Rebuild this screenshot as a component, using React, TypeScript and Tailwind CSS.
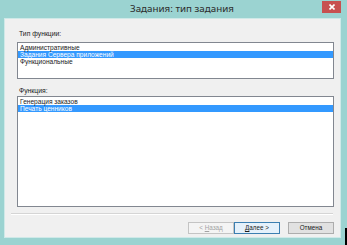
import React from 'react';

const font = { fontFamily: '"Liberation Sans", Arial, sans-serif' };

function ListBox({
  items,
  selected,
  className
}: {
  items: string[];
  selected: number;
  className: string;
}) {
  return (
    <div className={`ml-[12px] mr-[6px] border border-[#828790] bg-white pt-px ${className}`}>
      {items.map((item, i) => (
        <div
          key={item}
          className={`h-[7px] pl-[2px] text-[6.6px] leading-[7px] whitespace-nowrap ${
            i === selected ? 'bg-[#3399ff] text-white' : 'text-[#1a1a1a]'
          }`}>
          {item}
        </div>
      ))}
    </div>
  );
}

export default function App() {
  return (
    <div className="relative h-[245px] w-[347px] bg-[#9bd3d1]" style={font}>
      {/* Title bar */}
      <div className="relative flex h-[18px] items-center pl-[130px]">
        <span
          className="text-[9.8px] text-[#2b2b2b]"
          style={{ fontFamily: '"Noto Sans", "Open Sans", sans-serif' }}>
          Задания: тип задания
        </span>
        <button className="absolute right-[6px] top-[1px] flex h-[12px] w-[19px] items-center justify-center bg-[#c75050]">
          <svg width="6" height="6" viewBox="0 0 6 6">
            <path d="M0.5 0.5 L5.5 5.5 M5.5 0.5 L0.5 5.5" stroke="white" strokeWidth="1.6" />
          </svg>
        </button>
      </div>

      {/* Body */}
      <div className="ml-[4px] mr-[6px] flex h-[220px] flex-col border border-[#cfe9e8] bg-[#f0f0f0]">
        <div className="ml-[14px] mt-[10px] h-[9px] text-[6.8px] leading-[9px] text-[#1a1a1a]">
          Тип функции:
        </div>
        <ListBox
          className="mt-[4px] h-[37px]"
          items={['Административные', 'Задания Сервера приложений', 'Функциональные']}
          selected={1}
        />

        <div className="ml-[14px] mt-[7px] h-[9px] text-[6.8px] leading-[9px] text-[#1a1a1a]">
          Функция:
        </div>
        <ListBox
          className="mt-px h-[111px]"
          items={['Генерация заказов', 'Печать ценников']}
          selected={1}
        />

        {/* Separator */}
        <div className="ml-[6px] mr-[7px] mt-[6px] border-t border-b border-t-[#d5d5d5] border-b-white" />

        {/* Buttons */}
        <div className="mt-[7px] flex justify-end pr-[6px] text-[6.3px]">
          <button className="h-[12px] w-[46px] border border-[#c4c4c4] bg-[#f4f4f4] text-[#a3a3a3]">
            &lt; <u>Н</u>азад
          </button>
          <button className="h-[12px] w-[46px] border border-[#3c7fb1] bg-[#e5f1fb] text-[#1a1a1a]">
            <u>Д</u>алее &gt;
          </button>
          <button className="ml-[8px] h-[12px] w-[46px] border border-[#adadad] bg-[#e1e1e1] text-[#1a1a1a]">
            Отмена
          </button>
        </div>
      </div>

      <div className="absolute bottom-0 right-0 h-[17px] w-[2px] bg-black" />
    </div>
  );
}
